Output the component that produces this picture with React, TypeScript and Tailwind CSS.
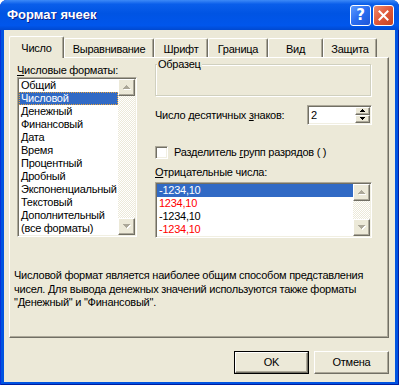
import React from "react";

const raised =
  "border border-t-white border-l-white border-r-[#716F64] border-b-[#716F64] shadow-[inset_-1px_-1px_#ACA899] bg-[#ECE9D8]";
const sunken =
  "border border-t-[#ACA899] border-l-[#ACA899] border-r-white border-b-white shadow-[inset_1px_1px_#716F64,inset_-1px_-1px_#F1EFE2]";

const formats = [
  "Общий",
  "Числовой",
  "Денежный",
  "Финансовый",
  "Дата",
  "Время",
  "Процентный",
  "Дробный",
  "Экспоненциальный",
  "Текстовый",
  "Дополнительный",
  "(все форматы)",
];

const negatives = [
  { text: "-1234,10", red: false, selected: true },
  { text: "1234,10", red: true },
  { text: "-1234,10", red: false },
  { text: "-1234,10", red: true },
];

const tabs = [
  { label: "Число", w: 55 },
  { label: "Выравнивание", w: 90 },
  { label: "Шрифт", w: 54 },
  { label: "Граница", w: 60 },
  { label: "Вид", w: 55 },
  { label: "Защита", w: 54 },
];

function Arrow({ up, disabled, small }: { up?: boolean; disabled?: boolean; small?: boolean }) {
  const d = small
    ? up
      ? "M2 0h1v1h1v1h1v1H0V2h1V1h1z"
      : "M0 0h5v1H4v1H3v1H2V2H1V1H0z"
    : up
      ? "M3 0h1v1h1v1h1v1h1v1H0V3h1V2h1V1h1z"
      : "M0 0h7v1H6v1H5v1H4v1H3V3H2V2H1V1H0z";
  const w = small ? 5 : 7;
  const h = small ? 3 : 4;
  return (
    <svg width={w + 1} height={h + 1} viewBox={`0 0 ${w + 1} ${h + 1}`} shapeRendering="crispEdges">
      {disabled && <path d={d} transform="translate(1 1)" fill="#fff" />}
      <path d={d} fill={disabled ? "#ACA899" : "#000"} />
    </svg>
  );
}

function ScrollBar() {
  return (
    <div className="flex w-[17px] flex-col">
      <div className={`${raised} flex h-[17px] items-center justify-center`}>
        <Arrow up disabled />
      </div>
      <div className="flex-1 bg-[image:repeating-conic-gradient(#ECE9D8_0%_25%,#FFFFFF_0%_50%)] bg-[length:2px_2px]" />
      <div className={`${raised} flex h-[17px] items-center justify-center`}>
        <Arrow disabled />
      </div>
    </div>
  );
}

function TitleButton({ kind }: { kind: "help" | "close" }) {
  const bg =
    kind === "help"
      ? "bg-[linear-gradient(135deg,#5C9BFF_0%,#2A6CF0_50%,#1E56D8_100%)]"
      : "bg-[linear-gradient(135deg,#F08A6C_0%,#E0583A_50%,#C84320_100%)]";
  return (
    <div
      className={`flex h-[21px] w-[21px] items-center justify-center rounded-[3px] border border-white ${bg}`}
    >
      {kind === "help" ? (
        <span className="font-['DejaVu_Sans',sans-serif] text-[15px] leading-none font-bold tracking-normal text-white">?</span>
      ) : (
        <svg width="11" height="11" viewBox="0 0 11 11">
          <path d="M1.5 1.5l8 8M9.5 1.5l-8 8" stroke="#fff" strokeWidth="2" strokeLinecap="square" />
        </svg>
      )}
    </div>
  );
}

export default function App() {
  return (
    <div className="h-[385px] w-[399px] font-['Liberation_Sans',Arial,sans-serif] text-[11px] tracking-[-0.25px] text-black">
      <div className="flex h-full flex-col rounded-t-[7px] bg-[#0053E1] shadow-[inset_1px_0_#0831D9,inset_-1px_-1px_#001EA0]">
        {/* title bar */}
        <div className="flex h-[30px] items-center rounded-t-[7px] bg-[linear-gradient(180deg,#3D8AF7_0%,#0A5EEA_14%,#0054E3_45%,#0056EC_85%,#0049D0_100%)] pr-[5px] pl-[7px]">
          <span className="flex-1 text-[13px] font-bold tracking-normal text-white [text-shadow:1px_1px_#0A1F8C]">
            Формат ячеек
          </span>
          <div className="flex gap-[2px]">
            <TitleButton kind="help" />
            <TitleButton kind="close" />
          </div>
        </div>

        {/* client */}
        <div className="mx-[4px] mb-[3px] flex flex-1 flex-col bg-[#ECE9D8] pl-[5px]">
          {/* tabs */}
          <div className="relative z-10 mt-[6px] -mb-px flex h-[22px] items-end">
            {tabs.map((t, i) =>
              i === 0 ? (
                <div
                  key={t.label}
                  style={{ width: t.w }}
                  className="flex h-[22px] items-center justify-center rounded-t-[2px] border-t border-r border-l border-t-white border-r-[#716F64] border-l-white bg-[#ECE9D8] pt-px shadow-[inset_-1px_0_#ACA899]"
                >
                  {t.label}
                </div>
              ) : (
                <div
                  key={t.label}
                  style={{ width: t.w }}
                  className="mb-px flex h-[19px] items-center justify-center rounded-t-[2px] border-t border-r border-l border-t-white border-r-[#716F64] border-l-white bg-[#ECE9D8] pt-[2px] shadow-[inset_-1px_0_#ACA899]"
                >
                  {t.label}
                </div>
              ),
            )}
          </div>

          {/* panel */}
          <div className="flex h-[281px] w-[380px] flex-col border border-t-white border-r-[#716F64] border-b-[#716F64] border-l-white shadow-[inset_-1px_-1px_#ACA899]">
            <div className="flex gap-[18px] pt-[6px] pl-[7px]">
              {/* left column */}
              <div className="flex w-[120px] flex-col">
                <div className="h-[13px] leading-[13px]">
                  <u>Ч</u>исловые форматы:
                </div>
                <div className={`${sunken} flex h-[160px] bg-white p-px`}>
                  <div className="flex-1 overflow-hidden">
                    {formats.map((f) => (
                      <div
                        key={f}
                        className={
                          f === "Числовой"
                            ? "h-[13px] bg-[#316AC5] px-[2px] leading-[13px] whitespace-nowrap text-white outline-1 -outline-offset-1 outline-[#E8A33C] outline-dotted"
                            : "h-[13px] px-[2px] leading-[13px] whitespace-nowrap"
                        }
                      >
                        {f}
                      </div>
                    ))}
                  </div>
                  <ScrollBar />
                </div>
              </div>

              {/* right column */}
              <div className="flex w-[217px] flex-col">
                <div className="relative h-[32px] w-[216px] border border-[#D0D0BF] shadow-[inset_1px_1px_#fff,1px_1px_#fff]">
                  <span className="absolute -top-[7px] left-[1px] bg-[#ECE9D8] px-px leading-[13px]">Образец</span>
                </div>

                <div className="mt-[9px] flex h-[20px] items-center justify-between">
                  <span>
                    Число десятичных <u>з</u>наков:
                  </span>
                  <div className={`${sunken} flex h-[20px] w-[65px] bg-white p-px`}>
                    <div className="flex-1 pl-[2px] leading-[16px]">2</div>
                    <div className="flex w-[15px] flex-col">
                      <div className={`${raised} flex flex-1 items-center justify-center`}>
                        <Arrow up small />
                      </div>
                      <div className={`${raised} flex flex-1 items-center justify-center`}>
                        <Arrow small />
                      </div>
                    </div>
                  </div>
                </div>

                <div className="mt-[21px] flex h-[13px] items-center gap-[6px]">
                  <div className={`${sunken} h-[13px] w-[13px] bg-white`} />
                  <span>
                    Разделитель <u>г</u>рупп разрядов ( )
                  </span>
                </div>

                <div className="mt-[7px] h-[13px] leading-[13px]">
                  <u>О</u>трицательные числа:
                </div>
                <div className={`${sunken} mt-[3px] flex h-[56px] bg-white p-px`}>
                  <div className="flex-1 overflow-hidden">
                    {negatives.map((n, i) => (
                      <div
                        key={i}
                        className={
                          n.selected
                            ? "h-[13px] bg-[#316AC5] px-[2px] leading-[13px] text-white"
                            : n.red
                              ? "h-[13px] px-[2px] leading-[13px] text-[#FF0000]"
                              : "h-[13px] px-[2px] leading-[13px]"
                        }
                      >
                        {n.text}
                      </div>
                    ))}
                  </div>
                  <ScrollBar />
                </div>
              </div>
            </div>

            <div className="mt-[31px] pl-[4px] leading-[13.5px] whitespace-nowrap">
              Числовой формат является наиболее общим способом представления
              <br />
              чисел. Для вывода денежных значений используются также форматы
              <br />
              "Денежный" и "Финансовый".
            </div>
          </div>

          {/* buttons */}
          <div className="mt-[13px] flex w-[380px] justify-end gap-[5px]">
            <div className="border border-black">
              <div className={`${raised} flex h-[21px] w-[73px] items-center justify-center`}>OK</div>
            </div>
            <div className={`${raised} flex h-[23px] w-[75px] items-center justify-center`}>Отмена</div>
          </div>
        </div>
      </div>
    </div>
  );
}
